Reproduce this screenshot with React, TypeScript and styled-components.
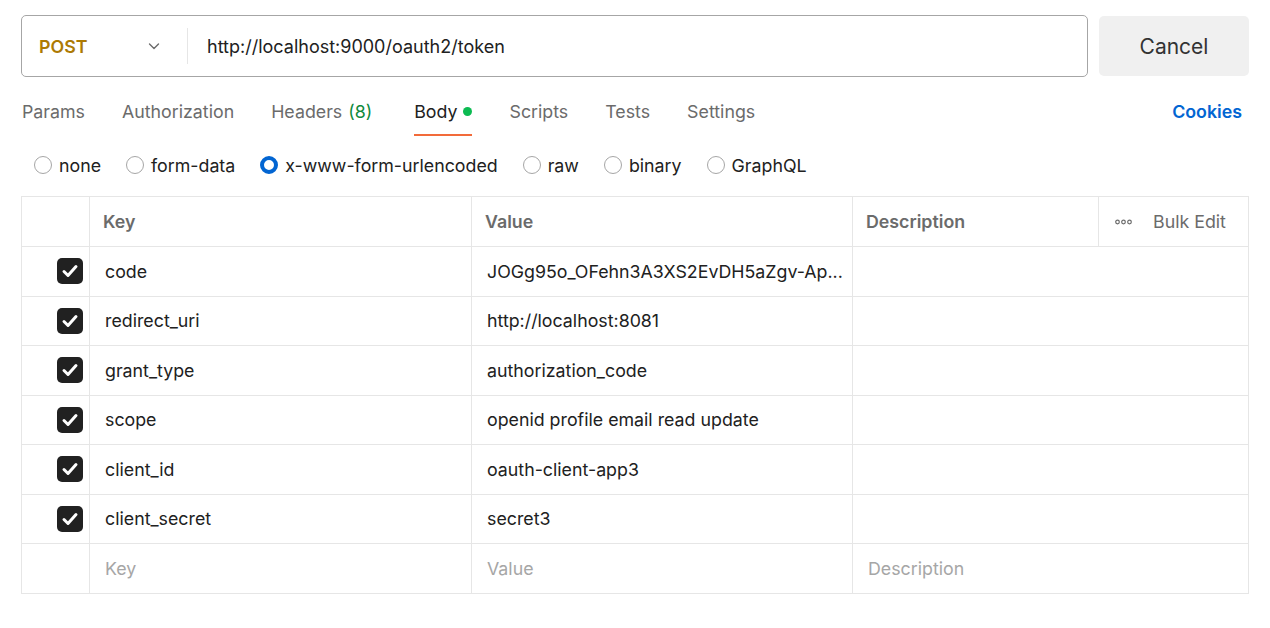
import React from "react";
import styled, { createGlobalStyle } from "styled-components";

const GlobalStyle = createGlobalStyle`
  html, body {
    margin: 0;
    padding: 0;
    background: #ffffff;
    font-family: Inter, "Noto Sans", sans-serif;
    color: #212121;
  }
`;

const Page = styled.div`
  padding: 15px 21px 0 21px;
  display: flex;
  flex-direction: column;
`;

const TopBar = styled.div`
  display: flex;
  gap: 11px;
  height: 62px;
`;

const UrlBox = styled.div`
  flex: 1;
  display: flex;
  align-items: center;
  border: 1px solid #a6a6a6;
  border-radius: 5px;
  box-sizing: border-box;
`;

const Method = styled.div`
  width: 165px;
  box-sizing: border-box;
  padding: 0 26px 0 17px;
  display: flex;
  align-items: center;
  justify-content: space-between;
  color: #ad7a03;
  font-weight: 600;
  font-size: 17.8px;
`;

const Divider = styled.div`
  width: 1px;
  height: 36px;
  background: #e6e6e6;
`;

const Url = styled.div`
  padding-left: 19px;
  font-size: 18px;
  color: #212121;
`;

const CancelButton = styled.button`
  width: 150px;
  border: none;
  border-radius: 5px;
  background: #f0f0f0;
  font-family: inherit;
  font-size: 21px;
  color: #333333;
  margin: 1px 0;
`;

const TabRow = styled.div`
  display: flex;
  align-items: stretch;
  margin-top: 11px;
  padding-left: 1px;
  height: 48px;
`;

const Tab = styled.div<{ active?: boolean }>`
  position: relative;
  display: flex;
  align-items: center;
  gap: 6px;
  padding-bottom: 2px;
  box-sizing: border-box;
  margin-right: 37px;
  font-size: 17.8px;
  color: ${(p) => (p.active ? "#212121" : "#6b6b6b")};

  &::after {
    content: "";
    display: ${(p) => (p.active ? "block" : "none")};
    position: absolute;
    left: 0;
    right: 0;
    bottom: 0;
    height: 2px;
    background: #f26b3a;
  }
`;

const Count = styled.span`
  color: #0f8a3c;
  margin-right: 5px;
`;

const Dot = styled.span`
  width: 9px;
  height: 9px;
  border-radius: 50%;
  background: #0cbb52;
`;

const Cookies = styled.div`
  margin-left: auto;
  margin-right: 7px;
  padding-bottom: 2px;
  display: flex;
  align-items: center;
  font-size: 17.8px;
  font-weight: 600;
  color: #0265d2;
`;

const RadioRow = styled.div`
  display: flex;
  align-items: center;
  height: 30px;
  margin-top: 14px;
  padding-left: 13px;
`;

const RadioItem = styled.label`
  display: flex;
  align-items: center;
  gap: 7px;
  margin-right: 25px;
  font-size: 17.8px;
  color: #212121;
`;

const RadioCircle = styled.span<{ checked?: boolean }>`
  width: 18px;
  height: 18px;
  box-sizing: border-box;
  border-radius: 50%;
  border: ${(p) => (p.checked ? "4px solid #0265d2" : "1px solid #a6a6a6")};
`;

const Table = styled.div`
  margin-top: 16px;
  width: 1228px;
  display: grid;
  grid-template-columns: 68px 382px 381px 246px 150px;
  border-top: 1px solid #e6e6e6;
  border-left: 1px solid #e6e6e6;
  box-sizing: border-box;
`;

const Cell = styled.div<{ span?: number; header?: boolean; placeholder?: boolean }>`
  grid-column: span ${(p) => p.span || 1};
  height: ${(p) => (p.header ? "50px" : "49.5px")};
  box-sizing: border-box;
  border-right: 1px solid #e6e6e6;
  border-bottom: 1px solid #e6e6e6;
  display: flex;
  align-items: center;
  padding-left: ${(p) => (p.header ? "13px" : "15px")};
  font-size: 17.8px;
  font-weight: ${(p) => (p.header ? 600 : 400)};
  color: ${(p) => (p.header ? "#6b6b6b" : p.placeholder ? "#a6a6a6" : "#212121")};
  white-space: nowrap;
  overflow: hidden;
`;

const CheckCell = styled(Cell)`
  justify-content: flex-end;
  padding-left: 0;
  padding-right: 6px;
`;

const Check = styled.span`
  width: 26px;
  height: 26px;
  border-radius: 5px;
  background: #212121;
  display: flex;
  align-items: center;
  justify-content: center;
`;

const BulkCell = styled(Cell)`
  gap: 21px;
  padding-left: 16px;
  font-weight: 400;
  color: #6b6b6b;
`;

const rows = [
  ["code", "JOGg95o_OFehn3A3XS2EvDH5aZgv-Ap..."],
  ["redirect_uri", "http://localhost:8081"],
  ["grant_type", "authorization_code"],
  ["scope", "openid profile email read update"],
  ["client_id", "oauth-client-app3"],
  ["client_secret", "secret3"],
];

const radios = ["none", "form-data", "x-www-form-urlencoded", "raw", "binary", "GraphQL"];

const CheckIcon = () => (
  <svg width="20" height="20" viewBox="0 0 20 20">
    <path d="M4 10.5l4 4L16 5.5" fill="none" stroke="#fff" strokeWidth="3" strokeLinecap="round" strokeLinejoin="round" />
  </svg>
);

const Chevron = () => (
  <svg width="14" height="14" viewBox="0 0 14 14">
    <path d="M2.5 5l4.5 4.5L11.5 5" fill="none" stroke="#6b6b6b" strokeWidth="1.4" strokeLinecap="round" strokeLinejoin="round" />
  </svg>
);

const MoreDots = () => (
  <svg width="17" height="6" viewBox="0 0 17 6">
    {[2.5, 8.5, 14.5].map((cx) => (
      <circle key={cx} cx={cx} cy="3" r="1.8" fill="none" stroke="#6b6b6b" strokeWidth="1.2" />
    ))}
  </svg>
);

export default function App() {
  return (
    <Page>
      <GlobalStyle />
      <TopBar>
        <UrlBox>
          <Method>
            POST
            <Chevron />
          </Method>
          <Divider />
          <Url>http://localhost:9000/oauth2/token</Url>
        </UrlBox>
        <CancelButton>Cancel</CancelButton>
      </TopBar>

      <TabRow>
        <Tab>Params</Tab>
        <Tab>Authorization</Tab>
        <Tab>
          <span>Headers</span>
          <Count>(8)</Count>
        </Tab>
        <Tab active>
          <span>Body</span>
          <Dot />
        </Tab>
        <Tab>Scripts</Tab>
        <Tab>Tests</Tab>
        <Tab>Settings</Tab>
        <Cookies>Cookies</Cookies>
      </TabRow>

      <RadioRow>
        {radios.map((r) => (
          <RadioItem key={r}>
            <RadioCircle checked={r === "x-www-form-urlencoded"} />
            {r}
          </RadioItem>
        ))}
      </RadioRow>

      <Table>
        <Cell header />
        <Cell header>Key</Cell>
        <Cell header>Value</Cell>
        <Cell header>Description</Cell>
        <BulkCell header>
          <MoreDots />
          Bulk Edit
        </BulkCell>
        {rows.map(([k, v]) => (
          <React.Fragment key={k}>
            <CheckCell>
              <Check>
                <CheckIcon />
              </Check>
            </CheckCell>
            <Cell>{k}</Cell>
            <Cell>{v}</Cell>
            <Cell span={2} />
          </React.Fragment>
        ))}
        <Cell />
        <Cell placeholder>Key</Cell>
        <Cell placeholder>Value</Cell>
        <Cell span={2} placeholder>
          Description
        </Cell>
      </Table>
    </Page>
  );
}
